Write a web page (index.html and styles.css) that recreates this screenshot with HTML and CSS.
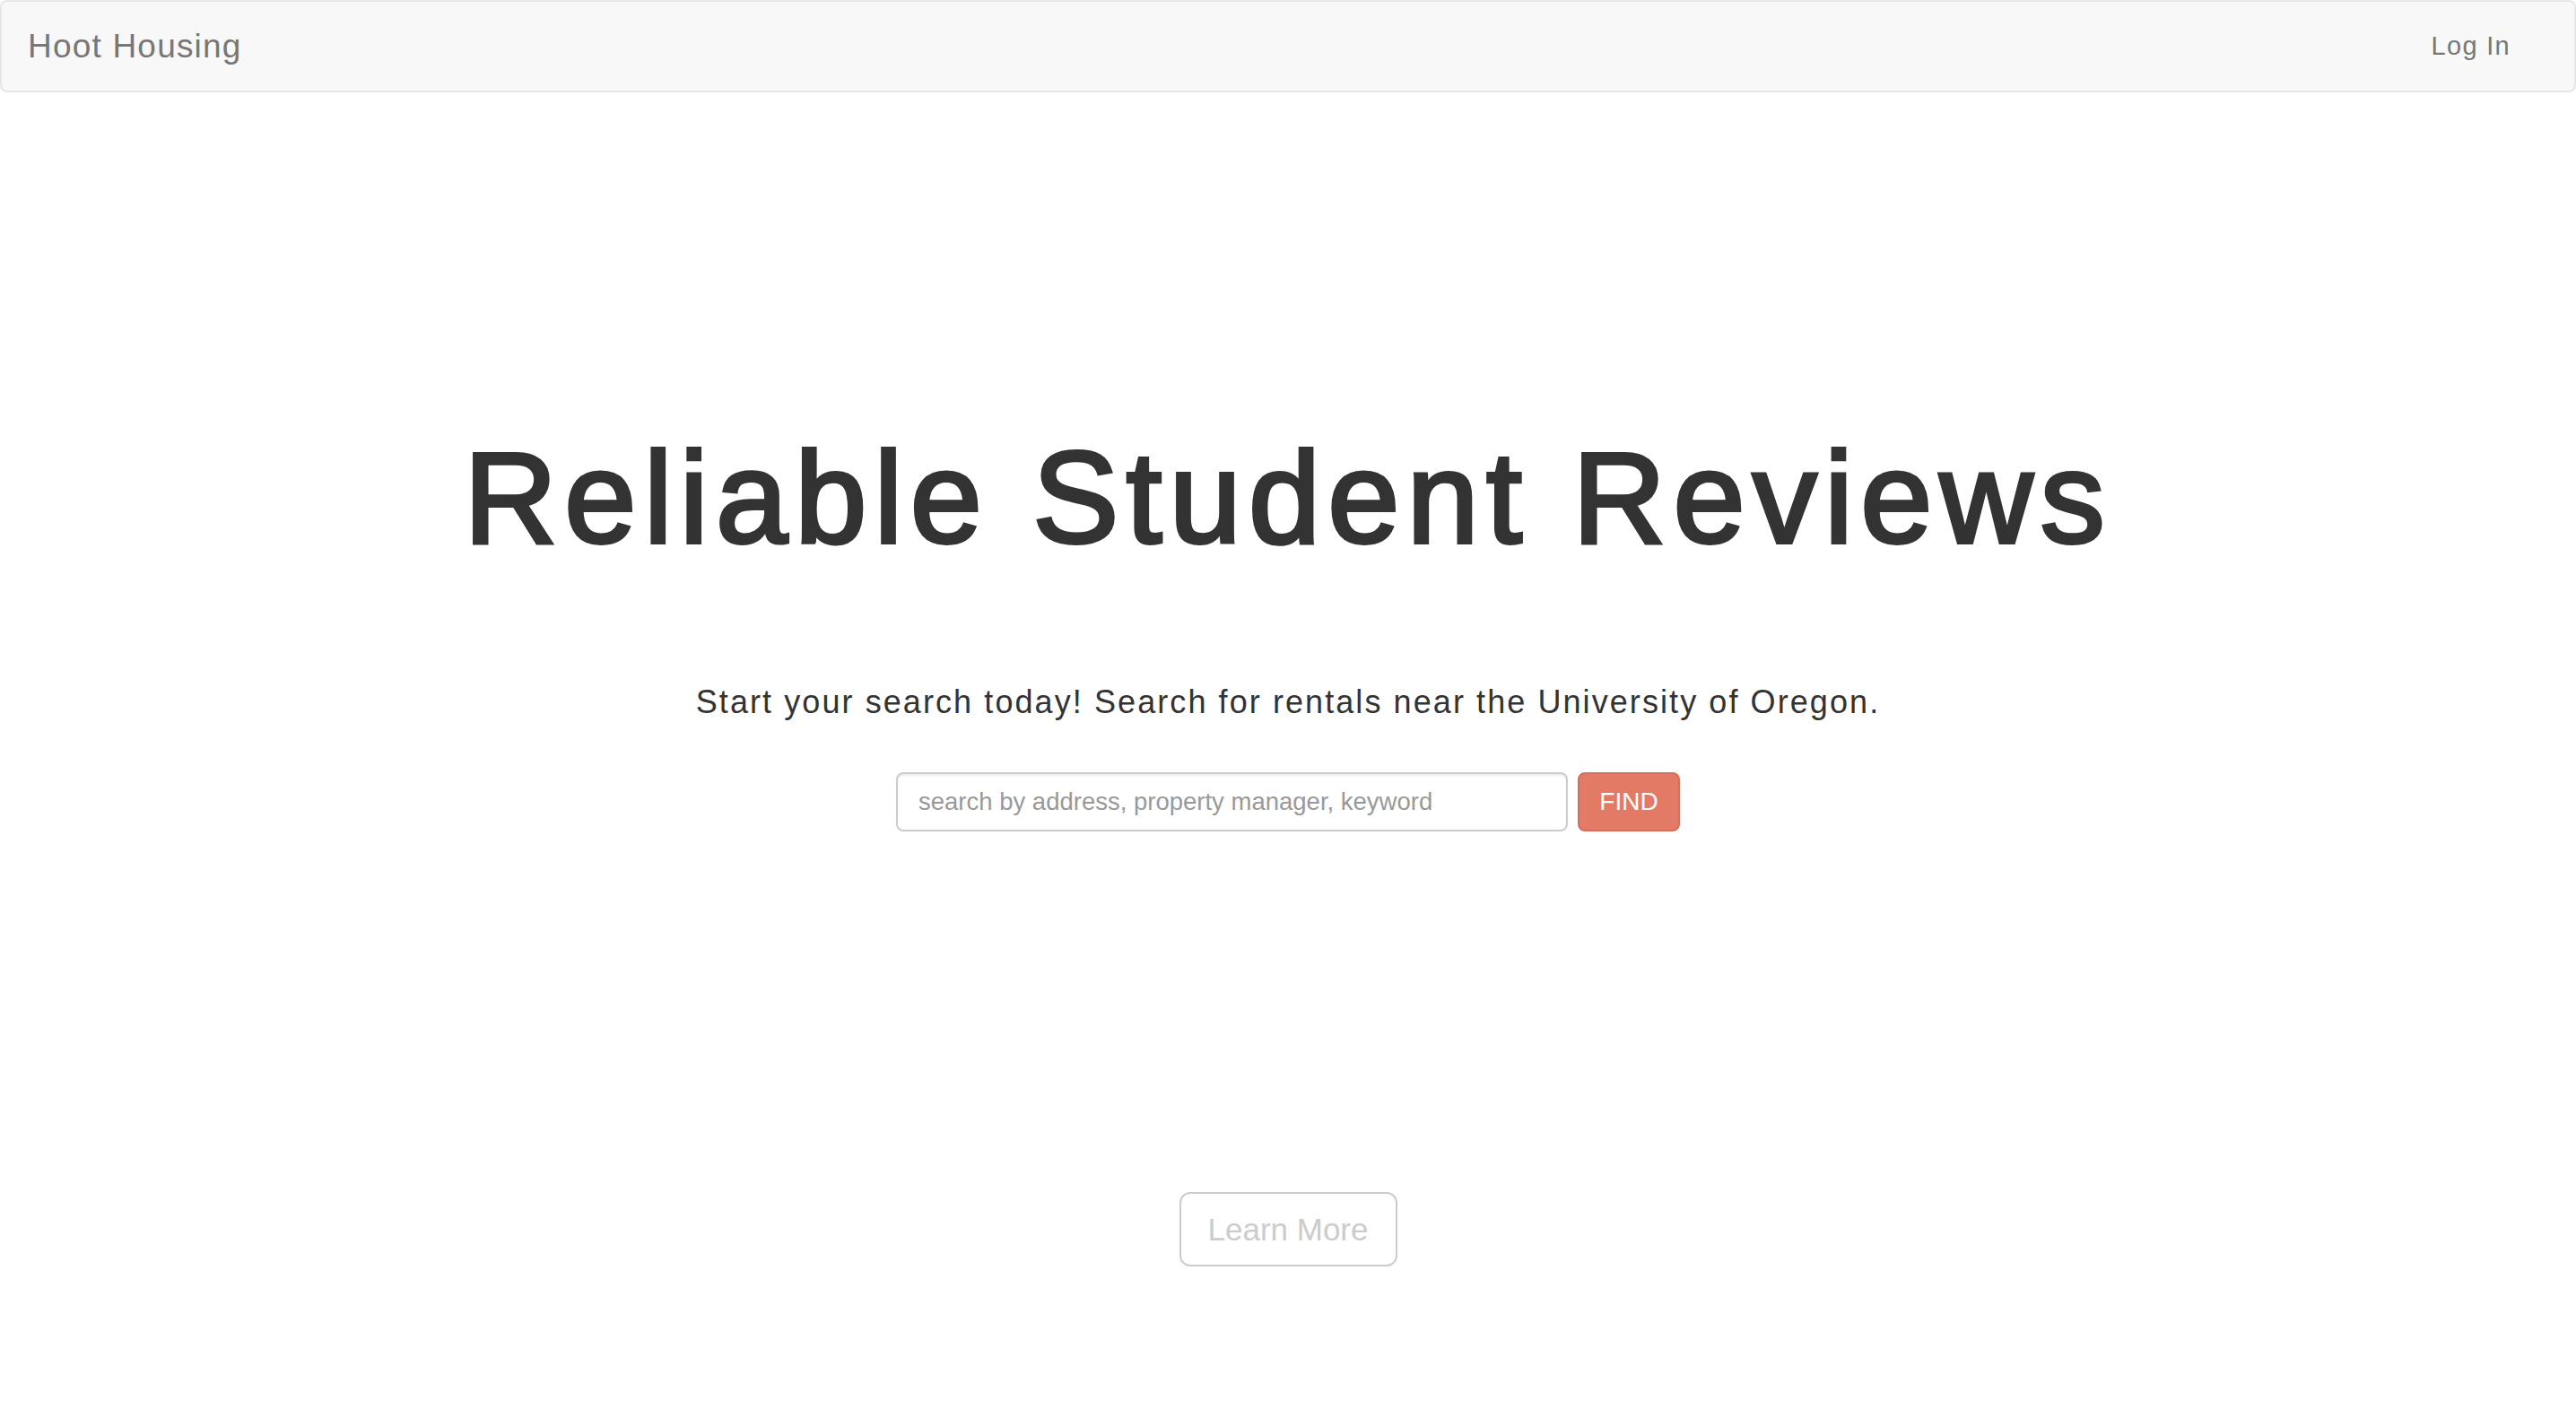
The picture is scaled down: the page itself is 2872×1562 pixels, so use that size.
FILE: index.html
```html
<!DOCTYPE html>
<html lang="en">
<head>
<meta charset="utf-8">
<title>Hoot Housing</title>
<link rel="stylesheet" href="styles.css">
</head>
<body>
<nav class="navbar">
  <a class="brand" href="#">Hoot Housing</a>
  <a class="nav-link" href="#">Log In</a>
</nav>
<main class="hero">
  <h1 class="title">Reliable Student Reviews</h1>
  <p class="lead">Start your search today! Search for rentals near the University of Oregon.</p>
  <form class="search">
    <input class="search-input" type="text" placeholder="search by address, property manager, keyword">
    <button class="find-btn" type="button">FIND</button>
  </form>
  <a class="learn-btn" href="#">Learn More</a>
</main>
</body>
</html>
```

FILE: styles.css
```css
html, body {
  margin: 0;
  padding: 0;
  background: #ffffff;
}
body {
  font-family: "Liberation Sans", Arial, Helvetica, sans-serif;
  color: #333333;
}
.navbar {
  box-sizing: border-box;
  height: 103px;
  display: flex;
  align-items: center;
  justify-content: space-between;
  background: #f8f8f8;
  border: 2px solid #e7e7e7;
  border-radius: 8px;
  padding: 0 71px 0 29px;
}
.brand {
  font-size: 37px;
  letter-spacing: 1.2px;
  color: #777777;
  text-decoration: none;
}
.nav-link {
  font-size: 29px;
  color: #777777;
  text-decoration: none;
  letter-spacing: 1.3px;
}
.hero {
  display: flex;
  flex-direction: column;
  align-items: center;
}
.title {
  margin: 374px 0 0;
  font-size: 144px;
  line-height: 158px;
  font-weight: normal;
  letter-spacing: 8.2px;
  color: #333333;
  -webkit-text-stroke: 4px #333333;
}
.lead {
  margin: 123px 0 0;
  font-size: 36px;
  line-height: 50px;
  letter-spacing: 2.08px;
  color: #333333;
}
.search {
  margin: 53px 0 0;
  display: flex;
  gap: 11px;
}
.search-input {
  box-sizing: border-box;
  width: 749px;
  height: 66px;
  border: 2px solid #cccccc;
  border-radius: 8px;
  padding: 0 23px;
  font-family: "Liberation Sans", Arial, sans-serif;
  font-size: 27.5px;
  color: #555555;
  box-shadow: inset 0 2px 2px rgba(0,0,0,0.075);
  outline: none;
}
.search-input::placeholder {
  color: #999999;
}
.find-btn {
  box-sizing: border-box;
  width: 114px;
  height: 66px;
  background: #e27a66;
  border: 2px solid #d4705d;
  border-radius: 8px;
  color: #ffffff;
  font-family: "Liberation Sans", Arial, sans-serif;
  font-size: 28px;
  padding: 0;
}
.learn-btn {
  box-sizing: border-box;
  margin-top: 402px;
  width: 243px;
  height: 83px;
  display: flex;
  align-items: center;
  justify-content: center;
  border: 2px solid #cccccc;
  border-radius: 12px;
  color: #cccccc;
  font-size: 35px;
  text-decoration: none;
}
```
